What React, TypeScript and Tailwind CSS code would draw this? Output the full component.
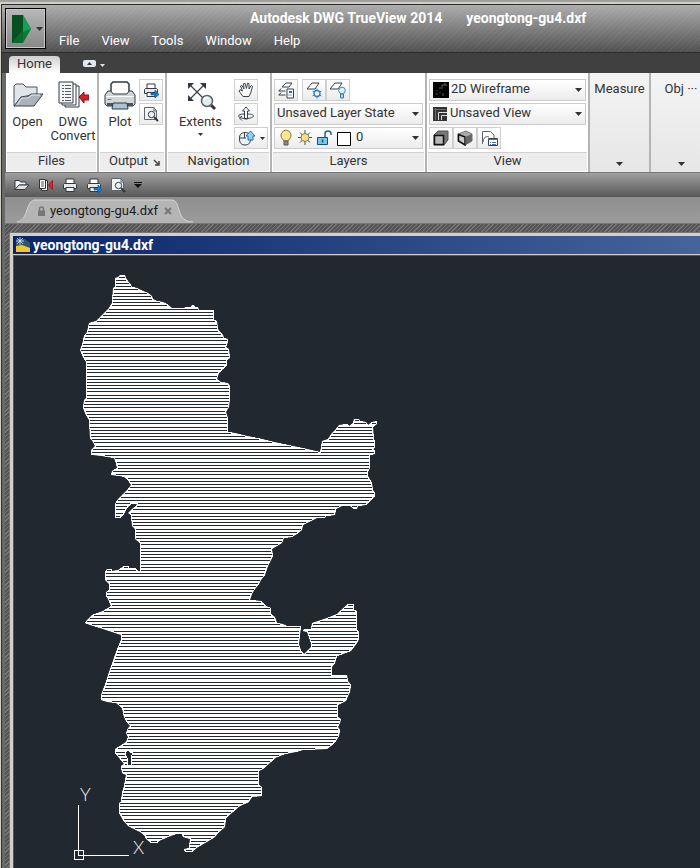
import type { ReactNode } from 'react';

const OUTLINE =
  '115,278 118,277 120,275 125,275 126,278 128,281 131,285 132,287 137,288 141,290 148,293 152,296 153,299 157,301 163,302 167,304 172,308 184,308 186,307 191,307 192,305 194,305 195,307 198,307 199,310 214,310 214,320 217,321 218,329 220,332 223,335 224,338 228,339 228,342 226,347 229,349 230,358 227,360 227,365 223,369 219,373 217,379 221,382 228,383 230,386 230,398 229,407 226,412 228,418 228,432 ' +
  '235,433 247,436 262,439 274,442 293,446 307,449 320,452 321,448 322,441 328,439 332,433 336,429 339,425 347,424 349,426 353,423 354,419 359,419 360,421 366,422 368,425 372,422 377,421 377,424 373,427 374,440 375,441 375,447 373,449 375,451 375,454 370,455 370,468 368,472 368,476 372,483 373,490 375,493 375,496 370,501 366,505 358,506 357,509 354,509 350,506 342,506 336,509 335,515 326,516 325,518 317,518 311,521 303,525 302,530 297,534 292,537 284,538 282,543 277,546 272,549 273,556 268,566 265,575 ' +
  '261,580 259,584 255,589 252,594 250,600 261,601 266,606 271,608 271,614 275,617 277,623 283,624 287,626 301,626 300,635 299,644 301,651 304,654 307,651 311,647 311,643 309,637 307,632 303,631 304,629 311,629 312,623 318,621 327,618 337,614 341,610 348,604 354,604 354,610 357,611 357,630 359,632 359,639 357,643 354,647 351,651 343,654 337,656 335,663 332,667 332,675 347,675 348,681 351,685 350,692 348,696 346,701 338,705 338,717 341,719 340,723 338,727 340,730 339,736 336,741 331,746 327,749 303,750 296,752 285,754 275,758 271,762 263,769 ' +
  '259,771 259,785 262,787 262,796 252,797 249,802 240,806 233,812 226,818 225,827 218,833 215,837 207,842 198,847 192,852 185,852 184,849 189,848 190,839 183,837 182,834 176,834 168,837 159,841 157,843 151,843 146,839 145,836 140,832 134,829 128,826 123,820 119,813 119,803 121,802 122,793 124,786 126,775 122,773 121,766 124,764 120,759 115,753 115,749 120,746 126,742 128,737 126,733 128,728 130,726 126,721 124,717 122,708 116,703 107,702 101,700 101,695 106,682 109,672 112,664 115,655 118,647 121,640 ' +
  '121,635 112,632 100,628 90,625 85,623 87,620 92,615 103,611 111,606 108,599 106,596 106,592 109,590 109,584 105,580 105,572 107,569 112,569 112,571 118,570 124,566 129,566 129,568 135,568 138,571 140,571 140,543 135,539 135,529 132,526 131,515 128,513 132,509 136,506 137,504 131,504 127,508 124,514 120,518 115,518 115,504 118,499 123,494 128,489 131,485 128,480 124,477 120,476 111,475 112,471 117,468 116,463 114,458 102,456 93,455 91,455 91,450 95,446 93,442 ' +
  '90,438 89,420 86,415 83,408 84,400 86,398 86,362 83,357 80,350 82,345 84,336 87,332 89,323 96,321 102,315 109,308 112,303 113,288 115,287';
const HOLE = '125,752 128,750 130,752 133,753 131,757 131,766 128,765 127,758 125,755';

const HATCH_ROWS = Array.from({ length: 184 }, (_, k) => Math.floor(446.15 + 3.1875 * (k - 54)));

function Drawing() {
  return (
    <svg viewBox="14 256 686 612" className="h-[612px] w-[686px] shrink-0" aria-label="yeongtong-gu boundary drawing">
      <defs>
        <clipPath id="boundary">
          <polygon points={OUTLINE} />
        </clipPath>
      </defs>
      <g shapeRendering="crispEdges">
        <polygon points={OUTLINE} fill="#fff" />
        <g clipPath="url(#boundary)">
          {HATCH_ROWS.map((y) => (
            <rect key={y} x="70" y={y} width="320" height="1" fill="#212830" />
          ))}
          <polygon points={OUTLINE} fill="none" stroke="#fff" strokeWidth="2" />
        </g>
        <polygon points={HOLE} fill="#212830" stroke="#fff" strokeWidth="1" />
        <path d="M78.5 805V855.500H129M74.500 850.500h9v9h-9z" fill="none" stroke="#fff" />
      </g>
      <text x="80" y="801" fill="#f0f0f0" fontSize="18" className="font-[Lato] font-light">Y</text>
      <text x="133" y="854" fill="#f0f0f0" fontSize="18" className="font-[Lato] font-light">X</text>
    </svg>
  );
}

function Icon({ w, h = w, children }: { w: number; h?: number; children: ReactNode }) {
  return (
    <svg width={w} height={h} viewBox={`0 0 ${w} ${h}`} className="shrink-0" aria-hidden="true">
      {children}
    </svg>
  );
}

const Caret = () => (
  <Icon w={7} h={4}>
    <path d="M0 0h7L3.500 4z" fill="#333" />
  </Icon>
);

const FolderLarge = () => (
  <Icon w={32}>
    <path d="M2 27V7l2-2h7l3 3h11v7L9 18 3 27z" fill="#e1e5ea" stroke="#4a525c" />
    <path d="M2 27 9 18h6l4-3h12l-9 12z" fill="#aab2bb" stroke="#3f4750" />
    <path d="M5 26l5-7h6l4-3h8" fill="none" stroke="#e6e9ed" />
  </Icon>
);
const ConvertLarge = () => (
  <Icon w={32}>
    <path d="M8 7h14v21H8z" fill="#fff" stroke="#333a42" />
    <path d="M5 5h14v21H5z" fill="#fff" stroke="#333a42" />
    <path d="M2 3h14v21H2z" fill="#f4f5f6" stroke="#333a42" />
    <path d="M5 6.500h2m1 0h6M5 9.500h2m1 0h6M5 12.500h2m1 0h6M5 15.500h2m1 0h6M5 18.500h2m1 0h6M5 21.500h2m1 0h6" stroke="#555c64" />
    <path d="M22 18l5-5v3h5v5h-5v3z" fill="#d42027" stroke="#8e1016" />
  </Icon>
);
const PrinterLarge = () => (
  <Icon w={32}>
    <path d="M7 13V5l2-2h14l2 2v8" fill="#fff" stroke="#333a42" strokeWidth="1.500" />
    <path d="M4 12h3l2 3h14l2-3h3l3 4v9l-2 2H3l-2-2v-9z" fill="#d2d6da" stroke="#333a42" />
    <path d="M2 17h28v1H2z" fill="#fff" />
    <path d="M3 24h26v3H3z" fill="#4d545c" />
    <path d="M9 24h14l1 6H8z" fill="#a9c3d1" stroke="#333a42" />
    <path d="M3.500 20.500h4" stroke="#777" />
  </Icon>
);
const ExtentsLarge = () => (
  <Icon w={32}>
    <path d="M5 6l14 14M19 6 5 20" stroke="#39414b" strokeWidth="1.300" />
    <path d="M3 4h6L3 10zM21 4h-6l6 6zM3 22h6l-6-6z" fill="#2f3741" />
    <path d="M26 26l4 4" stroke="#333" strokeWidth="3" />
    <circle cx="22" cy="22" r="5.500" fill="#e2eeee" stroke="#59616a" strokeWidth="1.500" />
    <path d="M18.500 21q1-3 4-2.500" fill="none" stroke="#fff" strokeWidth="1.500" />
  </Icon>
);
const Printer = ({ arrow = false }: { arrow?: boolean }) => (
  <Icon w={16}>
    <path d="M4 7V2h8v5" fill="#fff" stroke="#333a42" />
    <path d="M2.500 6.500h11l1 1v4h-13v-4z" fill="#e6e8ea" stroke="#333a42" />
    <path d="M4 10.500h8v4H4z" fill="#eef2f5" stroke="#333a42" />
    {arrow && <path d="M8 11h4V8l4 4.500-4 3.500v-3H8z" fill="#147fd2" stroke="#0b4f94" strokeWidth=".6" />}
  </Icon>
);
const Preview = () => (
  <Icon w={16}>
    <path d="M1.500 1.500h9l3 3v9h-12z" fill="#f3f5f8" stroke="#5b6675" />
    <path d="M11 1v4h3" fill="none" stroke="#5b6675" />
    <path d="M11 11l4 4" stroke="#333" strokeWidth="2" />
    <circle cx="8.500" cy="8.500" r="3.200" fill="#e8f2f5" stroke="#333a42" />
  </Icon>
);
const Hand = () => (
  <Icon w={16}>
    <path d="M5 14.500 1 9l1-1.300L4.500 9 2.500 4l1.200-.8L6 7 5.500 1.700 7 1.300 8.500 6.500 9.500 1.200l1.500.3L11 7l2.200-3.500 1.300.8L13 10l-2 4.500z" fill="#fff" stroke="#3b434d" />
  </Icon>
);
const Orbit = () => (
  <Icon w={16}>
    <path d="M6.500 13V5h-2L8 1l3.500 4h-2v8z" fill="#fff" stroke="#39414b" />
    <path d="M10 8c4 0 5.500 1 5.500 2s-3 2.500-7.500 2.500S.5 11 .5 10s2-2 5.500-2M4 10l-2.500 2L4 14.500" fill="none" stroke="#39414b" />
  </Icon>
);
const Wheel = () => (
  <Icon w={18} h={16}>
    <path d="M1.500 10V7Q2 2.500 7 2.500T12.500 7v3Q12 15 7 15T1.500 10z" fill="#eef1f4" stroke="#39414b" />
    <path d="M2 8h6M6.500 3v5" stroke="#39414b" />
    <path d="M10 10V6H8l4.500-5L17 6h-2v4z" fill="#8fd2f5" stroke="#1d6fb4" />
  </Icon>
);
const LayerProps = () => (
  <Icon w={18}>
    <path d="M5 6 9 2h6l-3 4zM1.500 10h7M4 7.500 2 10M1.500 14h7M4 11.500 2 14" fill="#fff" stroke="#39414b" />
    <path d="M10 8h6.500v9H10z" fill="#fff" stroke="#39414b" />
    <path d="M12 10h3v2h-3z" fill="#1c6fc4" />
    <path d="M11.500 14h1m1 0h1" stroke="#444" />
  </Icon>
);
const LayerFreeze = () => (
  <Icon w={18}>
    <path d="M2 8 7 2h7l-4 6z" fill="#fff" stroke="#39414b" />
    <path d="M12 7.500v10M7.500 10l9 5M7.500 15l9-5" stroke="#3b86c6" />
    <circle cx="12" cy="12.500" r="3" fill="#e9f6ff" stroke="#2f7cc0" strokeWidth="1.300" />
  </Icon>
);
const LayerOff = () => (
  <Icon w={18}>
    <path d="M1 8 6 2h7l-4 6z" fill="#fff" stroke="#39414b" />
    <circle cx="13" cy="9.500" r="3.300" fill="#dff3ff" stroke="#3b86c6" />
    <path d="M11.500 13h3v4h-3z" fill="#b9cfe0" stroke="#4579a8" />
  </Icon>
);
const LayerStatus = () => (
  <Icon w={82} h={18}>
    <g transform="translate(2 0)">
      <path d="M4 12Q0 8 1 5q2-4 5-4t5 4q1 3-3 7z" fill="#fce58c" stroke="#8c7a45" />
      <path d="M4 12h4v4H4z" fill="#8d8d8d" stroke="#555" />
      <path d="M25 1v15M18 8.500h14M20 3.500l10 10M30 3.500l-10 10" stroke="#4b4b4b" />
      <circle cx="25" cy="8.500" r="4" fill="#fce08a" stroke="#8c7a45" />
      <path d="M45 9V5q0-3 3-3t3 3v1" fill="none" stroke="#23618f" strokeWidth="1.500" />
      <path d="M37.500 8.500h10v7h-10z" fill="#7cc6e8" stroke="#174f78" />
      <path d="M42.500 10.500v3" stroke="#174f78" strokeWidth="1.500" />
      <path d="M57.500 3.500h13v13h-13z" fill="#fff" stroke="#000" />
    </g>
  </Icon>
);
const Wireframe = () => (
  <Icon w={16}>
    <path d="M0 0h16v16H0z" fill="#000" />
    <path d="M9 7V3h5M12 3V1M4 11v2M4 8v1m2-3h2m-1 4v1M10 11v3" fill="none" stroke="#777" strokeWidth=".8" />
  </Icon>
);
const ViewThumb = () => (
  <Icon w={14}>
    <path d="M0 0h14v14H0z" fill="#343434" />
    <path d="M5.500 13V5.500H14M8.500 13V8.500H14" fill="none" stroke="#ddd" />
    <path d="M1 2.500h12M2.500 1v12" stroke="#6a6a6a" />
  </Icon>
);
const Box = () => (
  <Icon w={16}>
    <path d="M1 5 5 1h10v9l-4 5H1z" fill="#777" stroke="#555" />
    <path d="M1.500 5.500h9v9h-9z" fill="#b8b8b8" stroke="#111" strokeWidth="1.500" />
  </Icon>
);
const BoxIso = () => (
  <Icon w={16}>
    <path d="M1 4 9 1l6 3v7l-7 4-7-4z" fill="#aaa" stroke="#777" />
    <path d="M1.500 4.500 8 7v8l-6.500-4z" fill="#ccc" stroke="#111" strokeWidth="1.500" />
    <path d="M8.500 7 15 4v7l-6.500 4z" fill="#666" />
  </Icon>
);
const ViewManager = () => (
  <Icon w={17}>
    <path d="M1.500 14V1.500h8L13 5v3M2 12q1-7 6-5" fill="#fff" stroke="#5b6675" />
    <path d="M7.500 8.500h9v7h-9z" fill="#fff" stroke="#39414b" />
    <path d="M7 9.500h10M9 12.500h1m1 0h4M9 14.500h1m1 0h4" stroke="#4e6f97" />
  </Icon>
);
const FolderSmall = () => (
  <Icon w={16}>
    <path d="M1 13V3.500h4.500l1 1.500H12v3H5z" fill="#f2f3f5" stroke="#333a42" />
    <path d="M1 12.500 5 8h10l-4 4.500z" fill="#dfe3e7" stroke="#333a42" />
  </Icon>
);
const ConvertSmall = () => (
  <Icon w={16}>
    <path d="M3.500 3.500h6v10h-6z" fill="#fff" stroke="#333" />
    <path d="M1.500 2.500h6v9h-6z" fill="#fff" stroke="#333" />
    <path d="M3 5h3M3 7h3M3 9h3" stroke="#555" />
    <path d="M14.500 3.500v9l-4-4.500z" fill="#e22" stroke="#8e1016" strokeWidth=".7" />
  </Icon>
);

function Panel({ title, width, launcher = false, children }: { title: string; width: string; launcher?: boolean; children: ReactNode }) {
  return (
    <section className={`flex shrink-0 flex-col border-r-2 border-[#b4b4b4] ${width}`}>
      <div className="flex h-[79px] pt-1.5">{children}</div>
      <footer className="mx-px flex h-[19px] items-start border-t border-[#d0d0d0] bg-[#ededed] px-1 text-[#333]">
        <h2 className="flex-1 text-center">{title}</h2>
        {launcher && (
          <button aria-label={`${title} settings`} className="mt-1.5">
            <Icon w={7}>
              <path d="M1 1l4 4M6 2v4H2" fill="none" stroke="#444" strokeWidth="1.500" />
            </Icon>
          </button>
        )}
      </footer>
    </section>
  );
}

function Big({ icon, width = 'flex-1', children }: { icon: ReactNode; width?: string; children: ReactNode }) {
  return (
    <button className={`flex flex-col items-center leading-[14px] ${width}`}>
      {icon}
      <span className="mt-1">{children}</span>
    </button>
  );
}

function Small({ label, wide = false, children }: { label: string; wide?: boolean; children: ReactNode }) {
  return (
    <button
      aria-label={label}
      className={`flex h-[22px] shrink-0 items-center justify-center gap-1 border border-[#cfcfcf] bg-linear-to-b from-white to-[#ececec] ${wide ? 'w-[34px]' : 'w-6'}`}
    >
      {children}
    </button>
  );
}

function Combo({ label, value, icon, pad }: { label: string; value: string; icon?: ReactNode; pad: string }) {
  return (
    <div className="relative">
      <select aria-label={label} className={`block h-[22px] w-full appearance-none rounded-none border border-[#cccccc] bg-linear-to-b from-white to-[#ececec] pb-0.5 ${pad}`}>
        <option>{value}</option>
      </select>
      <span className="pointer-events-none absolute inset-y-0 left-1 flex items-center">{icon}</span>
      <span className="pointer-events-none absolute inset-y-0 right-1 flex items-center">
        <Caret />
      </span>
    </div>
  );
}

function Collapsed({ title, grow = false }: { title: string; grow?: boolean }) {
  return (
    <button className={`flex flex-col items-center justify-between border-r-2 border-[#b4b4b4] bg-linear-to-b from-[#f4f4f4] to-[#e6e6e6] pt-2 pb-1.5 ${grow ? 'min-w-[62px] shrink-0 grow whitespace-nowrap' : 'w-[61px] shrink-0'}`}>
      {title}
      <Caret />
    </button>
  );
}

export default function App() {
  return (
    <div className="flex min-h-screen flex-col overflow-hidden bg-[#d4d0c8] font-[Roboto,'Noto_Sans_CJK_KR',sans-serif] text-[13px] leading-4 text-[#333]">
      <div className="mb-0.5 h-0.5 bg-[#a0a0a0]" />
      <div className="ml-px flex flex-1 flex-col border-l border-[#303030] bg-[#666a69]">
        <header className="flex h-[49px] shrink-0 border-y border-[#2b2b2b] bg-[image:repeating-linear-gradient(135deg,rgba(255,255,255,0.04)_0_1px,transparent_1px_4px),linear-gradient(#adadad,#515151)] text-white">
          <button aria-label="Application menu" className="mt-[3px] ml-[3px] flex h-[41px] w-[41px] shrink-0 items-center gap-1 border border-black bg-linear-to-b from-[#b8b8b8] to-[#888] pl-1.5 shadow-[inset_0_0_0_1px_#c8c8c8]">
            <Icon w={20} h={30}>
              <path d="M0 1h11l8 14-8 14H0z" fill="#087a35" />
              <path d="M0 1h11v15L0 29z" fill="#04501f" />
              <path d="M11 1l8 14-8 3z" fill="#12a052" />
              <path d="M0 29l11-13v13z" fill="#0a6b31" />
            </Icon>
            <Caret />
          </button>
          <div className="flex flex-1 flex-col">
            <h1 className="flex h-[25px] items-center gap-6 pl-[204px] text-sm font-bold whitespace-nowrap">
              <span>Autodesk DWG TrueView 2014</span>
              <span>yeongtong-gu4.dxf</span>
            </h1>
            <nav className="flex items-center gap-[22px] pl-[13px] leading-[22px]">
              <button>File</button>
              <button>View</button>
              <button>Tools</button>
              <button>Window</button>
              <button>Help</button>
            </nav>
          </div>
        </header>

        <div className="flex h-5 shrink-0 items-end bg-[#404040] pl-[7px]">
          <button className="h-[17px] w-[51px] rounded-t-sm bg-linear-to-b from-[#cfcfcf] to-white pb-0.5 leading-[14px]">Home</button>
          <button aria-label="Minimize ribbon" className="mb-1.5 ml-[23px] flex h-[7px] w-[13px] items-center justify-center rounded-xs bg-[#e3e7ee]">
            <Icon w={5} h={3}>
              <path d="M0 3h5L2.500 0z" fill="#333" />
            </Icon>
          </button>
          <button aria-label="Ribbon options" className="mb-1.5 ml-1">
            <Icon w={5} h={3}>
              <path d="M0 0h5L2.500 3z" fill="#dfe3ea" />
            </Icon>
          </button>
        </div>

        <main className="ml-[3px] flex flex-1 flex-col">
          <div className="ml-px flex h-[100px] shrink-0 overflow-hidden border-b border-[#777] bg-white">
            <Panel title="Files" width="w-[93px]">
              <Big icon={<FolderLarge />} width="w-[43px]">Open</Big>
              <Big icon={<ConvertLarge />}>
                DWG
                <br />
                Convert
              </Big>
            </Panel>
            <Panel title="Output" width="w-[68px]" launcher>
              <div className="flex flex-1 justify-center pl-1">
                <Big icon={<PrinterLarge />}>Plot</Big>
              </div>
              <div className="mr-0.5 ml-0.5 flex flex-col gap-0.5">
                <Small label="Batch plot"><Printer arrow /></Small>
                <Small label="Preview"><Preview /></Small>
              </div>
            </Panel>
            <Panel title="Navigation" width="w-[105px]">
              <button className="flex flex-1 flex-col items-center leading-[14px]">
                <ExtentsLarge />
                <span className="mt-1 mb-1">Extents</span>
                <Icon w={5} h={3}>
                  <path d="M0 0h5L2.500 3z" fill="#333" />
                </Icon>
              </button>
              <div className="mr-0.5 flex flex-col gap-0.5">
                <Small label="Pan"><Hand /></Small>
                <Small label="Orbit"><Orbit /></Small>
                <Small label="Steering wheel" wide>
                  <Wheel />
                  <Icon w={5} h={3}>
                    <path d="M0 0h5L2.500 3z" fill="#333" />
                  </Icon>
                </Small>
              </div>
            </Panel>
            <Panel title="Layers" width="w-[155px]">
              <div className="mr-0.5 ml-0.5 flex flex-1 flex-col gap-0.5">
                <div className="flex">
                  <Small label="Layer properties"><LayerProps /></Small>
                  <div className="ml-1 flex">
                    <Small label="Layer freeze"><LayerFreeze /></Small>
                    <Small label="Layer off"><LayerOff /></Small>
                  </div>
                </div>
                <Combo label="Layer state" value="Unsaved Layer State" pad="pl-0.5" />
                <Combo label="Layer" value="0" icon={<LayerStatus />} pad="pl-[81px]" />
              </div>
            </Panel>
            <Panel title="View" width="w-[163px]">
              <div className="mr-0.5 ml-0.5 flex flex-1 flex-col gap-0.5">
                <Combo label="Visual style" value="2D Wireframe" icon={<Wireframe />} pad="pl-[21px]" />
                <Combo label="Saved view" value="Unsaved View" icon={<ViewThumb />} pad="pl-5" />
                <div className="flex">
                  <Small label="Top view"><Box /></Small>
                  <Small label="Isometric view"><BoxIso /></Small>
                  <Small label="View manager"><ViewManager /></Small>
                </div>
              </div>
            </Panel>
            <Collapsed title="Measure" />
            <Collapsed title="Obj ···" grow />
          </div>

          <div className="flex h-6 shrink-0 items-center gap-2 bg-linear-to-b from-[#a0a0a0] to-[#585858] pl-[9px]">
            <button aria-label="Open"><FolderSmall /></button>
            <button aria-label="Convert"><ConvertSmall /></button>
            <button aria-label="Plot"><Printer /></button>
            <button aria-label="Batch plot"><Printer arrow /></button>
            <button aria-label="Plot preview"><Preview /></button>
            <button aria-label="Customize toolbar">
              <Icon w={8} h={6}>
                <path d="M0 0h8v1H0zM0 2h8L4 6z" fill="#111" />
              </Icon>
            </button>
          </div>

          <div className="flex h-[27px] shrink-0 items-end border-b border-[#777] bg-linear-to-b from-[#8f8f8f] to-[#9c9c9c] pl-3 text-[#1a1a1a]">
            <div className="relative flex h-6 w-44 items-center">
              <svg viewBox="0 0 176 24" preserveAspectRatio="none" className="absolute inset-0 h-full w-full" aria-hidden="true">
                <path d="M0 24c6-1 8-6 10-13s4-10 8-10h136c5 0 6 3 8 10s5 12 14 13z" fill="#b5b5b5" />
                <path d="M0 23c6-1 8-6 10-12s4-10 8-10h136c5 0 6 3 8 10s5 12 14 12" fill="none" stroke="#d6d6d6" />
              </svg>
              <span className="relative flex w-full items-center gap-1 pl-5">
                <Icon w={9} h={10}>
                  <path d="M2.500 5V3q0-2 2-2t2 2v2" fill="none" stroke="#777" strokeWidth="1.500" />
                  <path d="M1 4.500h7V10H1z" fill="#777" />
                </Icon>
                yeongtong-gu4.dxf
                <button aria-label="Close drawing" className="ml-0.5">
                  <Icon w={8}>
                    <path d="M1 1l6 6M7 1 1 7" stroke="#777" strokeWidth="2" />
                  </Icon>
                </button>
              </span>
            </div>
          </div>

          <div className="flex flex-1 flex-col bg-[image:repeating-linear-gradient(135deg,#777_0_1px,#555_1px_3px)] pt-2 pl-1">
            <div className="flex flex-1 flex-col border-t border-l border-[#777] bg-[#d4d0c8] pt-[3px] pl-[3px]">
              <div className="flex h-[18px] shrink-0 items-center gap-0.5 bg-linear-to-r from-[#0a246a] to-[#47639b] pl-0.5 text-white">
                <Icon w={16}>
                  <path d="M1 2h9l5 4v9H1z" fill="#30566f" />
                  <path d="M1 9l6-1 8 3v4H1z" fill="#f4c62c" />
                  <path d="M5 0v8M1 4h8M2 1l6 6M8 1 2 7" stroke="#d8eaf4" strokeWidth=".8" />
                </Icon>
                <h2 className="text-sm leading-4 font-bold">yeongtong-gu4.dxf</h2>
              </div>
              <div className="mt-px flex flex-1 overflow-hidden border-t border-l border-[#555] bg-[#212830]">
                <Drawing />
              </div>
            </div>
          </div>
        </main>
      </div>
    </div>
  );
}
